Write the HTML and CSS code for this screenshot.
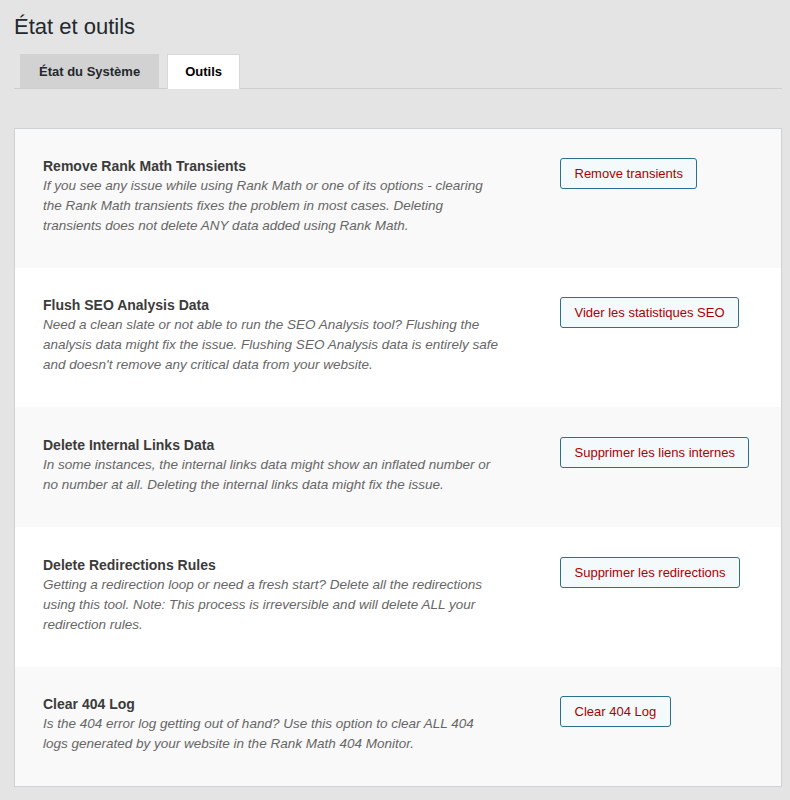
FILE: index.html
```html
<!DOCTYPE html>
<html lang="fr">
<head>
    <meta charset="UTF-8">
    <meta name="viewport" content="width=device-width, initial-scale=1.0">
    <title>État et outils</title>
    <link rel="stylesheet" href="styles.css">
</head>
<body>
    <div class="wrap">
        <h1>État et outils</h1>
        <nav class="tabs">
            <a class="tab">État du Système</a>
            <a class="tab active">Outils</a>
        </nav>

        <div class="tools">
            <div class="tool">
                <div class="tool-text">
                    <h4>Remove Rank Math Transients</h4>
                    <p>If you see any issue while using Rank Math or one of its options - clearing<br>the Rank Math transients fixes the problem in most cases. Deleting<br>transients does not delete ANY data added using Rank Math.</p>
                </div>
                <div class="tool-action"><button>Remove transients</button></div>
            </div>
            <div class="tool">
                <div class="tool-text">
                    <h4>Flush SEO Analysis Data</h4>
                    <p>Need a clean slate or not able to run the SEO Analysis tool? Flushing the<br>analysis data might fix the issue. Flushing SEO Analysis data is entirely safe<br>and doesn't remove any critical data from your website.</p>
                </div>
                <div class="tool-action"><button>Vider les statistiques SEO</button></div>
            </div>
            <div class="tool">
                <div class="tool-text">
                    <h4>Delete Internal Links Data</h4>
                    <p>In some instances, the internal links data might show an inflated number or<br>no number at all. Deleting the internal links data might fix the issue.</p>
                </div>
                <div class="tool-action"><button>Supprimer les liens internes</button></div>
            </div>
            <div class="tool">
                <div class="tool-text">
                    <h4>Delete Redirections Rules</h4>
                    <p>Getting a redirection loop or need a fresh start? Delete all the redirections<br>using this tool. Note: This process is irreversible and will delete ALL your<br>redirection rules.</p>
                </div>
                <div class="tool-action"><button>Supprimer les redirections</button></div>
            </div>
            <div class="tool">
                <div class="tool-text">
                    <h4>Clear 404 Log</h4>
                    <p>Is the 404 error log getting out of hand? Use this option to clear ALL 404<br>logs generated by your website in the Rank Math 404 Monitor.</p>
                </div>
                <div class="tool-action"><button>Clear 404 Log</button></div>
            </div>
        </div>
    </div>
</body>
</html>
```

FILE: styles.css
```css
body {
    margin: 0;
    background: #e4e4e4;
    font-family: "Liberation Sans", Arial, sans-serif;
    color: #23282d;
}
.wrap {
    padding: 12px 8px 0 14px;
}
h1 {
    margin: 0;
    font-size: 22px;
    font-weight: 400;
    line-height: 30px;
    color: #23282d;
}
.tabs {
    display: flex;
    gap: 8px;
    margin-top: 12px;
    padding-left: 6px;
    border-bottom: 1px solid #cfcfcf;
}
.tab {
    display: block;
    height: 33px;
    line-height: 33px;
    padding: 0 18px;
    font-size: 13px;
    font-weight: bold;
    color: #23282d;
    background: #d2d2d2;
    border: 1px solid #d2d2d2;
    border-bottom: none;
}
.tab.active {
    padding: 0 17px;
    background: #fff;
    border-color: #d8d8d8;
    color: #000;
    margin-bottom: -1px;
    height: 34px;
}
.tools {
    margin-top: 39px;
    background: #fff;
    border: 1px solid #cfd2d4;
    box-shadow: 0 1px 1px rgba(0, 0, 0, 0.04);
}
.tool {
    display: flex;
    padding: 27px 28px 32px;
}
.tool:nth-child(4n+3),
.tool:nth-child(4n+4) {
    padding-top: 28px;
}
.tool:nth-child(odd) {
    background: #f9f9f9;
}
.tool-text {
    flex: 0 0 460px;
}
.tool-text h4 {
    margin: 0;
    font-size: 14px;
    font-weight: bold;
    line-height: 20px;
    color: #3b3b3b;
}
.tool-text p {
    margin: 0;
    font-size: 13.5px;
    font-style: italic;
    line-height: 20px;
    color: #666;
    white-space: nowrap;
}
.tool-action {
    padding-left: 57px;
    padding-top: 2px;
}
.tool-action button {
    height: 31px;
    padding: 0 13.5px;
    font-family: "Liberation Sans", Arial, sans-serif;
    font-size: 13px;
    color: #a00;
    background: #f4f9fb;
    border: 1px solid #2d6f8e;
    border-radius: 3px;
    cursor: pointer;
    white-space: nowrap;
}
```
